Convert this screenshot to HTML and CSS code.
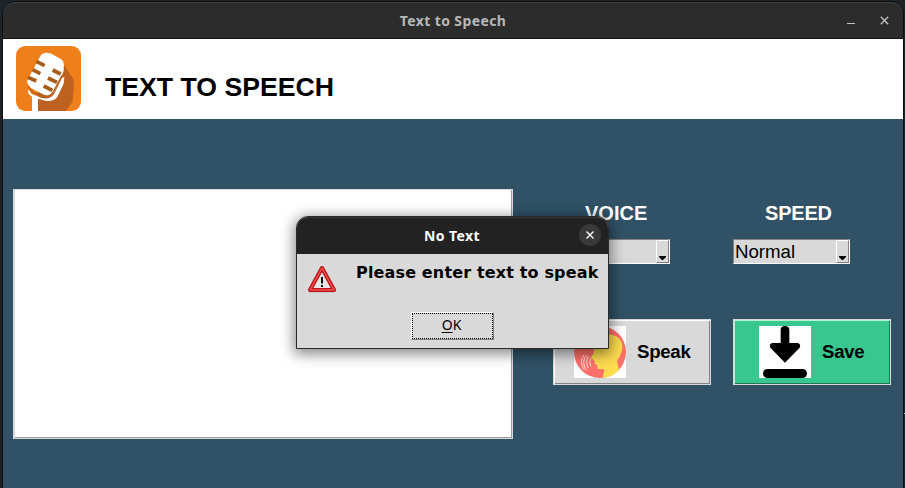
FILE: index.html
```html
<!DOCTYPE html>
<html lang="en">
<head>
<meta charset="utf-8">
<title>Text to Speech</title>
<link rel="stylesheet" href="styles.css">
</head>
<body>
<div class="window">
  <div class="titlebar">
    <span class="window-title">Text to Speech</span>
    <div class="controls">
      <svg width="8" height="10" viewBox="0 0 8 10"><path d="M0 8.5H8" stroke="#c4c4c4"/></svg>
      <svg width="9" height="9" viewBox="0 0 9 9"><path d="M.8.8 8.2 8.2M8.2.8.8 8.2" stroke="#bdbdbd" stroke-width="1.4"/></svg>
    </div>
  </div>
  <header class="header">
    <svg class="logo" viewBox="48 138 195 195">
      <rect x="48" y="138" width="195" height="195" rx="28" fill="#ef7f1a"/>
      <path d="M188 190 218 233 222 245 218 304 198 333H113V280Z" fill="#bc6120"/>
      <path d="M121 168Q131 154 151 160L181 176Q195 184 191 203L191 214 163 275Q151 291 132 284L94 265Q79 254 82 241Z" fill="#fff"/>
      <path d="M85 268 95 282 126 294Q153 300 164 279L186 233 193 231 191 251 172 291Q162 305 139 303L114 296V333H96V290L85 281Z" fill="#fff"/>
      <path d="M84 260 99 277 125 289Q149 295 161 274L186 227" fill="none" stroke="#b95c18" stroke-width="4"/>
      <path d="M109 184 134 197M98 209 121 221M84 232 109 243M158 210 182 222M144 234 171 247M131 258 157 271" stroke="#a85a18" stroke-width="11"/>
    </svg>
    <h1>TEXT TO SPEECH</h1>
  </header>
  <main class="content">
    <div class="text-entry"></div>
    <div class="options">
      <div class="label">VOICE</div>
      <div class="label speed">SPEED</div>
      <div class="combo"><span></span><div class="drop"><svg width="7" height="4" viewBox="0 0 7 4"><path d="M0 0H7V1L4 4H3L0 1Z"/></svg></div></div>
      <div class="combo"><span>Normal</span><div class="drop"><svg width="7" height="4" viewBox="0 0 7 4"><path d="M0 0H7V1L4 4H3L0 1Z"/></svg></div></div>
      <div class="button">
        <svg class="picture" viewBox="87 48 156 156">
          <path fill="#fff" d="M87 48h156v156H87z"/>
          <circle cx="165" cy="126" r="78" fill="#ff6f69"/>
          <path d="M145 108Q145 73 185 73Q231 75 232 111Q230 136 216 151L222 181Q202 202 173 204L178 178 158 177 156 164 148 161 150 155 146 149 138 145 147 126Z" fill="#fddc4f"/>
          <path d="M137 145Q130 157 138 169M130 139Q120 156 130 174M124 136Q108 157 124 179M117 134Q102 157 117 179" fill="none" stroke="#fff" stroke-width="2.3"/>
        </svg>
        <span>Speak</span>
      </div>
      <div class="button save">
        <svg class="picture" viewBox="102 48 156 156">
          <path fill="#fff" d="M102 48h156v156H102z"/>
          <path d="M167 60Q167 48 180 48Q193 48 193 60V99H218Q229 103 224 113L180 158 136 113Q131 103 142 99H167Z"/>
          <rect x="114" y="177" width="132" height="27" rx="13.5"/>
        </svg>
        <span>Save</span>
      </div>
    </div>
  </main>
</div>
<div class="screen-mark"></div>
<div class="dialog">
  <div class="dialog-title">
    <span>No Text</span>
    <div class="close"><svg width="8" height="8" viewBox="0 0 8 8"><path d="M.5.5 7.5 7.5M7.5.5.5 7.5" stroke="#fff" stroke-width="1.4"/></svg></div>
  </div>
  <div class="dialog-body">
    <div class="message">
      <svg class="warning" width="30" height="30" viewBox="0 0 30 30">
        <path d="M15 4.500 3 26.500H27Z" fill="none" stroke="#999" stroke-opacity=".5" stroke-width="4" stroke-linejoin="round"/>
        <path d="M15 4 3 26H27Z" fill="#e6e6e6" stroke="#b30d12" stroke-width="4" stroke-linejoin="round"/>
        <path d="M15 4 3 26H27Z" fill="none" stroke="#dc2629" stroke-width="2.400" stroke-linejoin="round"/>
        <path d="M15 4 3 26H27Z" fill="none" stroke="#e96a6a" stroke-width=".8" stroke-linejoin="round"/>
        <path d="M14 13h2v6.500H14zM14 21h2v2H14z" fill="#111"/>
      </svg>
      <span>Please enter text to speak</span>
    </div>
    <div class="ok"><div class="focus"><span class="key">O</span>K</div></div>
  </div>
</div>
</body>
</html>
```

FILE: styles.css
```css
* { box-sizing: border-box; }
body {
  margin: 0;
  width: 905px;
  height: 488px;
  padding: 1px 1px 0 2px;
  overflow: hidden;
  position: relative;
  background: #1d2327;
  font-family: "Liberation Sans", sans-serif;
}
svg { display: block; flex: none; }
.window {
  width: 902px;
  height: 490px;
  border: 1px solid #0b0d0f;
  border-radius: 13px 13px 0 0;
  overflow: hidden;
  background: #305166;
}
.titlebar {
  height: 37px;
  display: grid;
  grid-template-columns: 1fr auto 1fr;
  align-items: center;
  background: #2c2c2c;
  border-top: 1px solid #414141;
  border-bottom: 1px solid #171516;
  border-radius: 12px 12px 0 0;
}
.window-title {
  grid-column: 2;
  color: #b8b8b8;
  font: bold 14px "Noto Sans", sans-serif;
  letter-spacing: .4px;
}
.controls {
  display: flex;
  justify-content: flex-end;
  align-items: center;
  gap: 25px;
  padding: 0 14px 1px 0;
}
.header {
  height: 80px;
  display: flex;
  align-items: flex-start;
  padding: 7px 0 0 13px;
  gap: 24px;
  background: #fff;
}
.logo { width: 65px; height: 65px; }
h1 {
  margin: 26px 0 0;
  font-size: 26.670px;
  line-height: 30px;
  color: #000;
}
.content {
  display: flex;
  gap: 40px;
  padding: 70px 0 0 10px;
}
.text-entry {
  width: 500px;
  height: 250px;
  background: #fff;
  border: 1px solid #d9d9d9;
  border-width: 1px 1px 1px 2px;
  box-shadow: inset -1px -1px #9b9b9b;
}
.options {
  display: grid;
  grid-template-columns: 158px 158px;
  grid-template-rows: 37px 80px 66px;
  column-gap: 22px;
  padding-top: 13px;
  align-content: start;
}
.label {
  padding-left: 32px;
  color: #fff;
  font-size: 20px;
  font-weight: bold;
  line-height: 23px;
}
.speed { letter-spacing: -.2px; }
.combo, .button { align-self: start; }
.combo {
  width: 117px;
  height: 25px;
  display: flex;
  justify-content: space-between;
  background: #d9d9d9;
  border: 1px solid;
  border-color: #828282 #fff #fff #828282;
  font-size: 18.670px;
  line-height: 24px;
  padding-left: 1px;
}
.drop {
  width: 13px;
  height: 23px;
  display: flex;
  align-items: flex-end;
  justify-content: center;
  padding-bottom: 2px;
  border: 1px solid;
  border-color: #fff #828282 #828282 #fff;
}
.button {
  width: 158px;
  height: 66px;
  display: flex;
  align-items: center;
  padding-left: 20px;
  gap: 11px;
  background: #d9d9d9;
  border: 1px solid #d9d9d9;
  box-shadow: inset 1px 1px #fff, inset -1px -1px #828282;
  color: #000;
  font-size: 18.670px;
  font-weight: bold;
  letter-spacing: -.3px;
}
.picture { width: 52px; height: 52px; }
.save {
  padding-left: 25px;
  background: #39c790;
  box-shadow: inset 1px 1px #b4f1d4, inset -1px -1px #227756;
}
.screen-mark {
  position: absolute;
  left: 904px;
  top: 413px;
  width: 1px;
  height: 1px;
  background: #bbb;
}
.dialog {
  position: absolute;
  left: 296px;
  top: 216px;
  width: 313px;
  height: 133px;
  border: 1px solid #292929;
  border-radius: 12px 12px 0 0;
  background: #d9d9d9;
  box-shadow: 0 3px 14px 2px rgba(0, 0, 0, .47);
}
.dialog-title {
  height: 37px;
  display: grid;
  grid-template-columns: 1fr auto 1fr;
  align-items: center;
  padding-bottom: 2px;
  background: #222;
  border-top: 1px solid #343434;
  border-radius: 11px 11px 0 0;
  color: #fff;
  font: bold 14px "Noto Sans", sans-serif;
  letter-spacing: .4px;
}
.dialog-title span { grid-column: 2; margin-left: -1px; }
.close {
  width: 22px;
  height: 22px;
  display: grid;
  place-items: center;
  justify-self: end;
  margin-right: 7px;
  border-radius: 50%;
  background: #393939;
}
.dialog-body { padding-top: 10px; }
.message {
  display: flex;
  gap: 19px;
  padding-left: 10px;
  color: #000;
  font: bold 16px/18px "DejaVu Sans", sans-serif;
  letter-spacing: .15px;
  white-space: nowrap;
}
.ok {
  width: 83px;
  height: 28px;
  margin: 18px 0 0 114px;
  border: 1px solid;
  border-color: #fff #828282 #828282 #fff;
}
.focus {
  height: 26px;
  border: 1px dotted #000;
  color: #000;
  padding-right: 2px;
  text-align: center;
  font: 14px/21px "Noto Sans", sans-serif;
}
.key {
  text-decoration: underline;
  text-decoration-thickness: 1px;
  text-underline-offset: 2px;
}
```
